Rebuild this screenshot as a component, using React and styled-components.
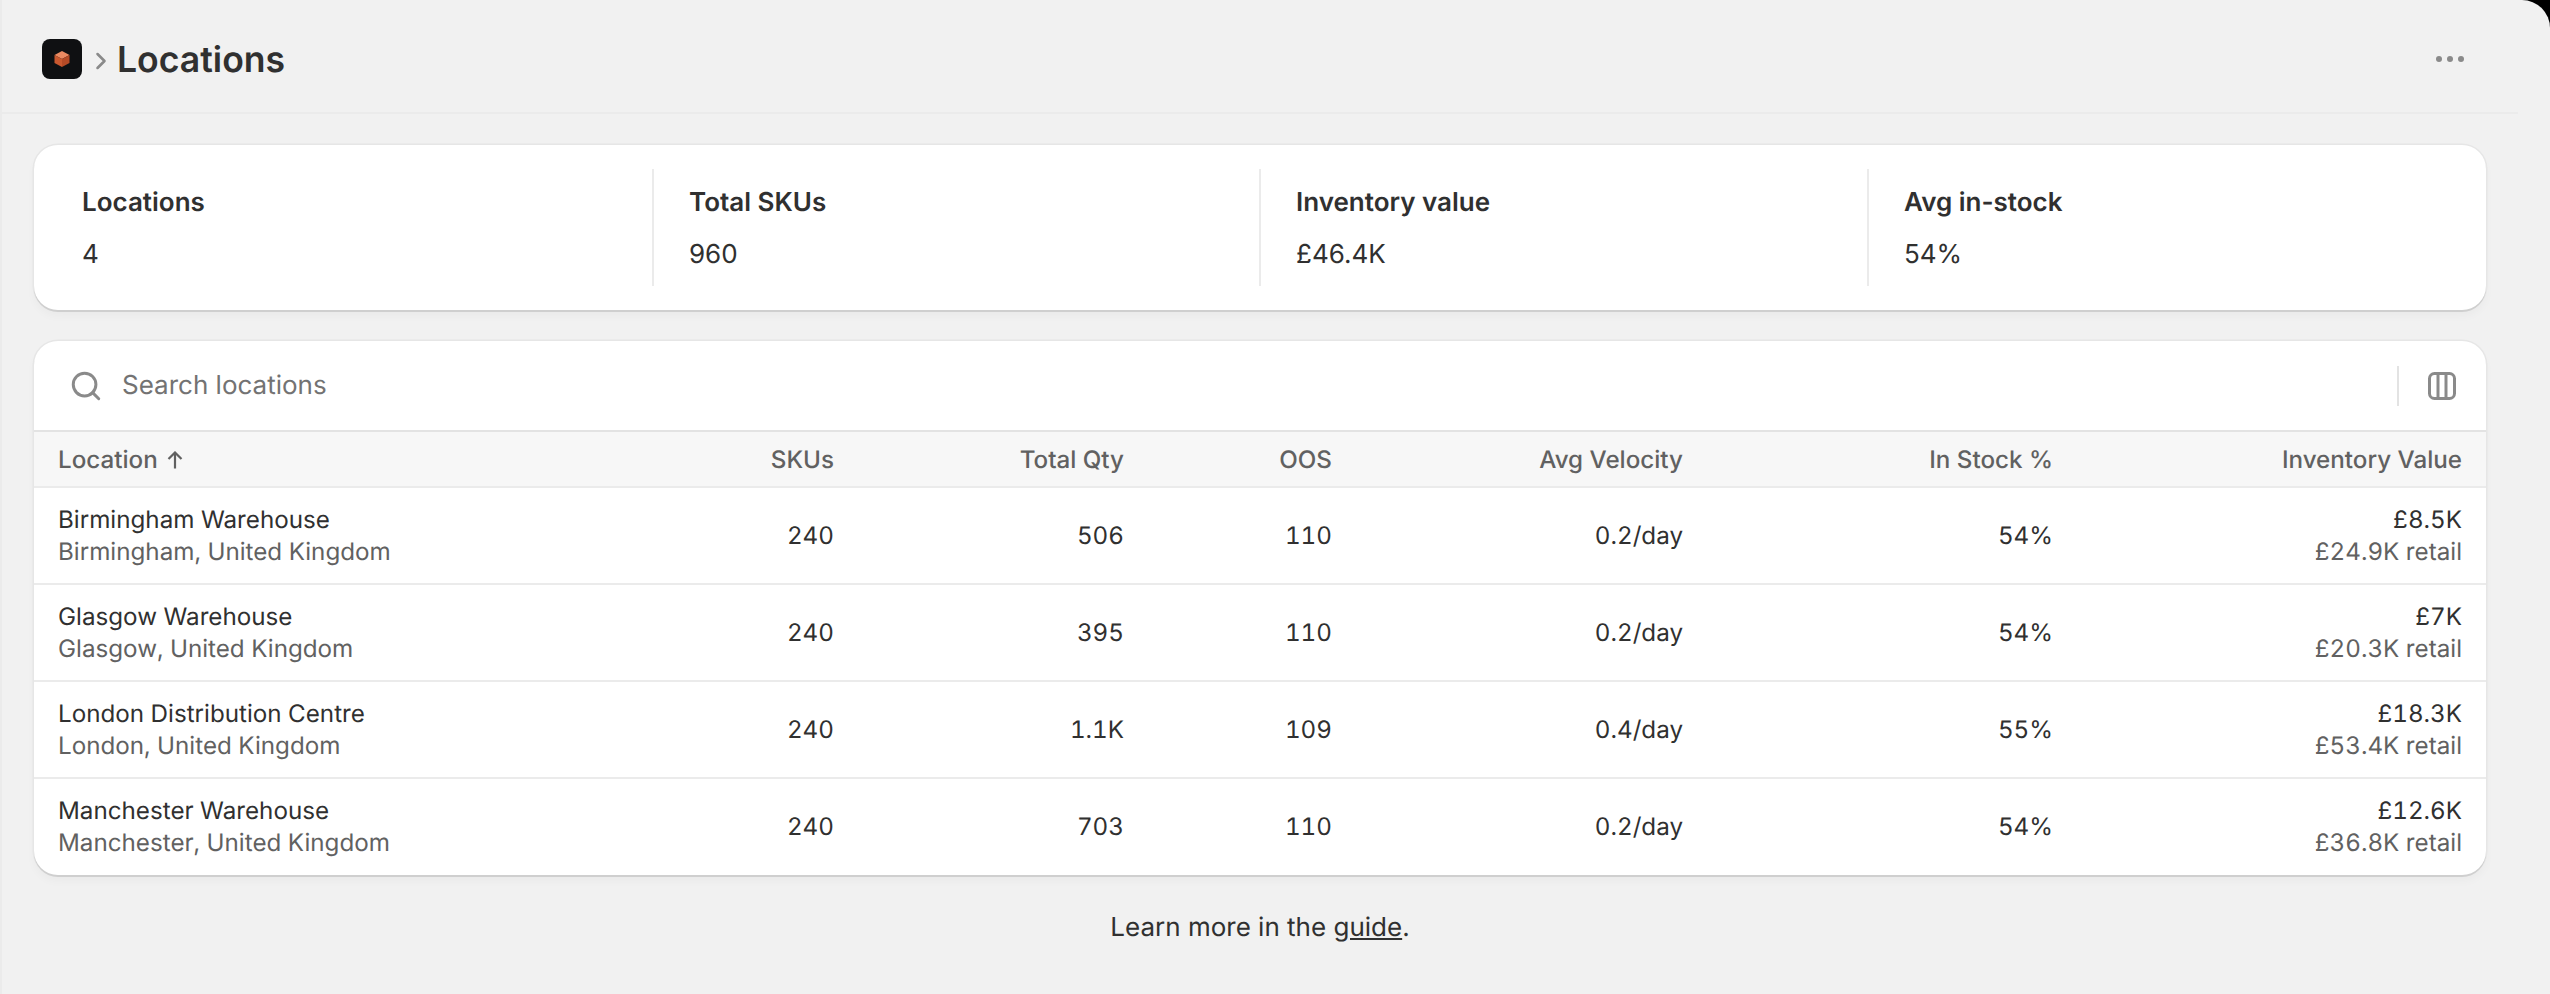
import styled, { createGlobalStyle } from "styled-components";
import { Search, ChevronRight } from "lucide-react";

const GlobalStyle = createGlobalStyle`
  html, body {
    margin: 0;
    padding: 0;
    background: #000;
  }
  body {
    font-family: Inter, "Noto Sans", sans-serif;
    color: #303030;
    text-rendering: geometricPrecision;
  }
`;

const Page = styled.main`
  box-sizing: border-box;
  width: 2550px;
  height: 994px;
  overflow: hidden;
  background: #f1f1f1;
  border-left: 2px solid #ebebeb;
  border-top-right-radius: 28px;
`;

const Inner = styled.div`
  width: 2516px;
`;

const Header = styled.header`
  box-sizing: border-box;
  height: 114px;
  display: flex;
  align-items: center;
  padding: 6px 48px 0 40px;
  border-bottom: 2px solid #ebebeb;
`;

const LogoBox = styled.div`
  width: 40px;
  height: 40px;
  border-radius: 8px;
  background: #0f1012;
  display: flex;
  align-items: center;
  justify-content: center;
`;

const Crumb = styled.span`
  display: flex;
  color: #8a8a8a;
  margin: 4px 2px 0 5px;
`;

const Title = styled.h1`
  flex: 1;
  margin: 2px 0 0;
  font-size: 35.6px;
  line-height: 44px;
  font-weight: 600;
  color: #303030;
`;

const Dots = styled.div`
  display: flex;
  gap: 5px;
  margin-right: 6px;
`;

const Dot = styled.i`
  width: 6px;
  height: 6px;
  border-radius: 50%;
  background: #8a8a8a;
`;

const Content = styled.div`
  padding: 31px 32px 0;
  display: flex;
  flex-direction: column;
  gap: 31px;
`;

const Card = styled.section`
  background: #fff;
  border-radius: 24px;
  overflow: hidden;
  box-shadow:
    0 2px 0 #cfcfcf,
    0 0 0 1.5px #e6e6e6,
    0 6px 10px rgba(0, 0, 0, 0.03);
`;

const Stats = styled.div`
  height: 165px;
  padding: 24px;
  box-sizing: border-box;
  display: grid;
  grid-template-columns: 594px 607px 608px 595px;
`;

const Stat = styled.div`
  padding: 2px 0 0 35px;
  border-left: 2px solid #ebebeb;
  display: flex;
  flex-direction: column;
  justify-content: center;
  gap: 20px;

  &:first-child {
    padding-left: 24px;
    border-left: 0;
  }
`;

const StatLabel = styled.div`
  font-size: 26px;
  line-height: 32px;
  font-weight: 600;
  color: #303030;
`;

const StatValue = styled.div`
  font-size: 26px;
  line-height: 32px;
  color: #303030;
`;

const SearchRow = styled.div`
  height: 89px;
  display: flex;
  align-items: center;
  padding: 0 29px 0 35px;
  color: #8a8a8a;
`;

const Placeholder = styled.span`
  flex: 1;
  margin-left: 19px;
  font-size: 26px;
  color: #737373;
`;

const ToolDivider = styled.span`
  width: 2px;
  height: 40px;
  background: #e3e3e3;
  margin-right: 28px;
`;

const Table = styled.table`
  width: 100%;
  table-layout: fixed;
  border-collapse: separate;
  border-spacing: 0;
  font-size: 24.2px;
`;

const Th = styled.th`
  box-sizing: border-box;
  height: 58px;
  padding: 0 24px;
  background: #f7f7f7;
  border-top: 2px solid #e3e3e3;
  border-bottom: 2px solid #ebebeb;
  font-weight: 500;
  color: #616161;
  text-align: ${(props) => (props.$left ? "left" : "right")};
  white-space: nowrap;
`;

const SortArrow = styled.svg`
  width: 16px;
  height: 18px;
  margin-left: 9px;
  vertical-align: -1px;
  fill: none;
  stroke: #616161;
  stroke-width: 2.2;
`;

const Td = styled.td`
  box-sizing: border-box;
  height: 97px;
  padding: 0 24px;
  border-bottom: 2px solid #ebebeb;
  line-height: 32px;
  color: #303030;
  text-align: ${(props) => (props.$left ? "left" : "right")};
  white-space: nowrap;
  font-feature-settings: "tnum";

  tr:last-child > & {
    height: 96px;
    border-bottom: 0;
  }
`;

const Strong = styled.div`
  color: #303030;
`;

const Sub = styled.div`
  color: #616161;
`;

const FooterNote = styled.p`
  margin: 6px 0 0;
  text-align: center;
  font-size: 26px;
  line-height: 32px;
  color: #303030;
`;

const GuideLink = styled.a`
  color: inherit;
  text-decoration: underline;
`;

const CubeLogo = () => (
  <svg width="18" height="18" viewBox="0 0 18 18">
    <path d="M9 1l7.500 4L9 9 1.500 5z" fill="#ea8a62" />
    <path d="M1.500 5L9 9v8l-7.500-4z" fill="#c9582f" />
    <path d="M16.500 5L9 9v8l7.500-4z" fill="#b54a26" />
  </svg>
);

const ColumnsIcon = () => (
  <svg width="30" height="30" viewBox="0 0 30 30" fill="none" stroke="#8a8a8a" strokeWidth="3">
    <rect x="2.500" y="2.500" width="25" height="25" rx="5" />
    <path d="M11 2.500v25M19 2.500v25" />
  </svg>
);

const stats = [
  { label: "Locations", value: "4" },
  { label: "Total SKUs", value: "960" },
  { label: "Inventory value", value: "£46.4K" },
  { label: "Avg in-stock", value: "54%" },
];

const columns = [
  { name: "Location", width: 520 },
  { name: "SKUs", width: 304 },
  { name: "Total Qty", width: 290 },
  { name: "OOS", width: 208 },
  { name: "Avg Velocity", width: 351 },
  { name: "In Stock %", width: 370 },
  { name: "Inventory Value", width: 409 },
];

const locations = [
  { name: "Birmingham Warehouse", place: "Birmingham, United Kingdom", skus: 240, qty: "506", oos: 110, velocity: "0.2/day", inStock: "54%", value: "£8.5K", retail: "£24.9K retail" },
  { name: "Glasgow Warehouse", place: "Glasgow, United Kingdom", skus: 240, qty: "395", oos: 110, velocity: "0.2/day", inStock: "54%", value: "£7K", retail: "£20.3K retail" },
  { name: "London Distribution Centre", place: "London, United Kingdom", skus: 240, qty: "1.1K", oos: 109, velocity: "0.4/day", inStock: "55%", value: "£18.3K", retail: "£53.4K retail" },
  { name: "Manchester Warehouse", place: "Manchester, United Kingdom", skus: 240, qty: "703", oos: 110, velocity: "0.2/day", inStock: "54%", value: "£12.6K", retail: "£36.8K retail" },
];

const App = () => {
  return (
    <Page>
      <GlobalStyle />
      <Inner>
        <Header>
          <LogoBox>
            <CubeLogo />
          </LogoBox>
          <Crumb>
            <ChevronRight size={28} strokeWidth={2.2} />
          </Crumb>
          <Title>Locations</Title>
          <Dots>
            <Dot />
            <Dot />
            <Dot />
          </Dots>
        </Header>
        <Content>
          <Card>
            <Stats>
              {stats.map((s) => (
                <Stat key={s.label}>
                  <StatLabel>{s.label}</StatLabel>
                  <StatValue>{s.value}</StatValue>
                </Stat>
              ))}
            </Stats>
          </Card>
          <Card>
            <SearchRow>
              <Search size={34} strokeWidth={2.1} />
              <Placeholder>Search locations</Placeholder>
              <ToolDivider />
              <ColumnsIcon />
            </SearchRow>
            <Table>
              <colgroup>
                {columns.map((c) => (
                  <col key={c.name} width={c.width} />
                ))}
              </colgroup>
              <thead>
                <tr>
                  {columns.map((c, i) => (
                    <Th key={c.name} $left={i === 0}>
                      {c.name}
                      {i === 0 && (
                        <SortArrow viewBox="0 0 16 18">
                          <path d="M8 17.500V1.500M1.500 8L8 1.500 14.500 8" />
                        </SortArrow>
                      )}
                    </Th>
                  ))}
                </tr>
              </thead>
              <tbody>
                {locations.map((l) => (
                  <tr key={l.name}>
                    <Td $left>
                      <Strong>{l.name}</Strong>
                      <Sub>{l.place}</Sub>
                    </Td>
                    <Td>{l.skus}</Td>
                    <Td>{l.qty}</Td>
                    <Td>{l.oos}</Td>
                    <Td>{l.velocity}</Td>
                    <Td>{l.inStock}</Td>
                    <Td>
                      <Strong>{l.value}</Strong>
                      <Sub>{l.retail}</Sub>
                    </Td>
                  </tr>
                ))}
              </tbody>
            </Table>
          </Card>
          <FooterNote>
            Learn more in the <GuideLink href="#">guide</GuideLink>.
          </FooterNote>
        </Content>
      </Inner>
    </Page>
  );
};

export default App;
